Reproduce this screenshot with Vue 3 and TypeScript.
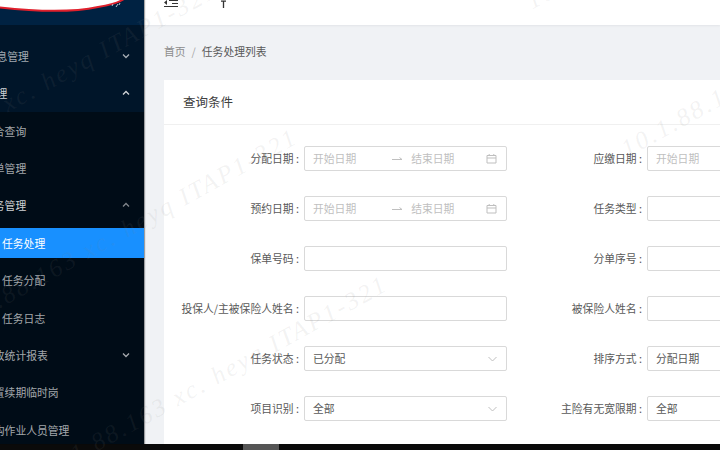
<script setup lang="ts">
type MenuItem = {
  label: string;
  level: number;
  arrow?: "up" | "down";
  light?: boolean;
  active?: boolean;
};

type Field = {
  label: string;
  kind: "date" | "text" | "select";
  value?: string;
};

const topItems: MenuItem[] = [
  { label: "保单信息管理", level: 1, arrow: "down" },
  { label: "合同管理", level: 1, arrow: "up", light: true },
];

const subItems: MenuItem[] = [
  { label: "综合查询", level: 2 },
  { label: "保单管理", level: 2 },
  { label: "任务管理", level: 2, arrow: "up", light: true },
  { label: "任务处理", level: 3, active: true },
  { label: "任务分配", level: 3 },
  { label: "任务日志", level: 3 },
  { label: "催收统计报表", level: 2, arrow: "down" },
  { label: "设置续期临时岗", level: 2 },
  { label: "机构作业人员管理", level: 2 },
];

const fields: Field[] = [
  { label: "分配日期", kind: "date" },
  { label: "应缴日期", kind: "date" },
  { label: "预约日期", kind: "date" },
  { label: "任务类型", kind: "select" },
  { label: "保单号码", kind: "text" },
  { label: "分单序号", kind: "text" },
  { label: "投保人/主被保险人姓名", kind: "text" },
  { label: "被保险人姓名", kind: "text" },
  { label: "任务状态", kind: "select", value: "已分配" },
  { label: "排序方式", kind: "select", value: "分配日期" },
  { label: "项目识别", kind: "select", value: "全部" },
  { label: "主险有无宽限期", kind: "select", value: "全部" },
];

const marks = ["mark-a", "mark-b", "mark-c", "mark-d", "mark-e"];
</script>

<template>
  <div class="screen">
    <div class="body">
      <aside class="sidebar">
        <div class="logo">
          <svg class="logo-mark" width="144" height="25" viewBox="0 0 144 25">
            <path
              d="M-4 7 C30 11 70 13 98 7 C110 5 120 3 125 -2 L-4 -2 Z"
              fill="#fff"
              stroke="#e0202c"
              stroke-width="2"
            />
            <path d="M112 6l1-2M116 7l2-3M119 5l1-2" stroke="#b8c4d2" stroke-width="1" />
          </svg>
        </div>
        <nav class="menu">
          <div
            v-for="item in topItems"
            :key="item.label"
            class="menu-item"
            :class="[`level-${item.level}`, { light: item.light }]"
          >
            <span class="menu-label">{{ item.label }}</span>
            <svg v-if="item.arrow" class="chevron" :class="item.arrow" width="8" height="6" viewBox="0 0 8 6">
              <path d="M1 1.5l3 3 3-3" fill="none" stroke="currentColor" stroke-width="1.3" />
            </svg>
          </div>
          <div class="submenu">
            <div
              v-for="item in subItems"
              :key="item.label"
              class="menu-item"
              :class="[`level-${item.level}`, { light: item.light, active: item.active }]"
            >
              <span class="menu-label">{{ item.label }}</span>
              <svg v-if="item.arrow" class="chevron" :class="item.arrow" width="8" height="6" viewBox="0 0 8 6">
                <path d="M1 1.5l3 3 3-3" fill="none" stroke="currentColor" stroke-width="1.3" />
              </svg>
            </div>
          </div>
        </nav>
      </aside>

      <main class="main">
        <header class="topbar">
          <svg width="14" height="8" viewBox="0 0 14 8">
            <path d="M5 .5h9M8 3.5h6M0 6.5h14" fill="none" stroke="#333" stroke-width="1.2" />
            <path d="M0 2.5l3-2.5v5z" fill="#333" />
          </svg>
          <svg class="top-icon" width="7" height="8" viewBox="0 0 7 8">
            <path d="M3.5 8V1M1 1.2h5" fill="none" stroke="#333" stroke-width="1.3" />
          </svg>
        </header>

        <div class="breadcrumb">
          <span class="crumb-home">首页</span>
          <span class="crumb-sep">/</span>
          <span class="crumb-current">任务处理列表</span>
        </div>

        <section class="card">
          <div class="card-title">查询条件</div>
          <div class="form">
            <div v-for="field in fields" :key="field.label" class="field">
              <label class="field-label">{{ field.label }} :</label>
              <div class="control">
                <template v-if="field.kind === 'date'">
                  <span class="date-part">开始日期</span>
                  <svg class="range-arrow" width="11" height="6" viewBox="0 0 11 6">
                    <path d="M0 3.5h10M7.5 1.5l2.5 2" fill="none" stroke="#bfbfbf" stroke-width="1" />
                  </svg>
                  <span class="date-part">结束日期</span>
                  <svg class="calendar" width="11" height="11" viewBox="0 0 11 11">
                    <path
                      d="M1 2.5h9v7.5h-9zM1 5h9M3.2 1v2M7.8 1v2"
                      fill="none"
                      stroke="#bfbfbf"
                      stroke-width="1"
                    />
                  </svg>
                </template>
                <template v-else-if="field.kind === 'select'">
                  <span class="value">{{ field.value }}</span>
                  <svg class="select-arrow" width="9" height="6" viewBox="0 0 9 6">
                    <path d="M.5 1l4 4 4-4" fill="none" stroke="#bfbfbf" stroke-width="1" />
                  </svg>
                </template>
              </div>
            </div>
          </div>
        </section>
      </main>
    </div>

    <div class="bottom-strip">
      <span class="strip-thumb"></span>
    </div>

    <div class="watermarks" aria-hidden="true">
      <span v-for="mark in marks" :key="mark" class="mark" :class="mark">10.1.88.163 xc. heyq ITAP1-321</span>
    </div>
  </div>
</template>

<style>
html,
body {
  margin: 0;
  background: #0a0a0a;
}
</style>

<style scoped>
.screen {
  position: relative;
  display: flex;
  flex-direction: column;
  width: 720px;
  height: 450px;
  overflow: hidden;
  font-family: "Noto Sans CJK SC", "Liberation Sans", sans-serif;
  font-size: 10.8px;
}

.body {
  display: flex;
  height: 444px;
}

.sidebar {
  flex: 0 0 144px;
  overflow: hidden;
  background: #000c17;
  box-shadow: 1px 0 1px rgba(0, 0, 0, 0.35);
  z-index: 1;
}

.logo {
  height: 25px;
  background: #002242;
}

.logo-mark {
  display: block;
}

.menu {
  display: flex;
  flex-direction: column;
  padding-top: 12.3px;
  background: #001529;
}

.submenu {
  display: flex;
  flex-direction: column;
  background: #000c17;
}

.menu-item {
  display: flex;
  align-items: center;
  height: 30px;
  margin: 3.7px 0;
  color: rgba(255, 255, 255, 0.65);
  white-space: nowrap;
}

.menu-item.light {
  color: rgba(255, 255, 255, 0.82);
}

.menu-item.active {
  background: #1890ff;
  color: #fff;
}

.menu-label {
  flex: 1;
}

.level-1 .menu-label {
  margin-left: -36px;
}

.level-2 .menu-label {
  margin-left: -17px;
}

.level-3 .menu-label {
  margin-left: 2px;
}

.chevron {
  flex: none;
  margin-right: 14px;
}

.chevron.up {
  transform: rotate(180deg);
}

.level-2.light .chevron {
  color: rgba(255, 255, 255, 0.5);
}

.main {
  flex: 1;
  min-width: 0;
  overflow: hidden;
  background: #f0f2f5;
}

.topbar {
  display: flex;
  align-items: flex-start;
  height: 25px;
  padding-left: 20px;
  background: #fff;
  box-shadow: 0 1px 2px rgba(0, 21, 41, 0.06);
}

.topbar svg {
  display: block;
}

.top-icon {
  margin-left: 42px;
}

.breadcrumb {
  display: flex;
  align-items: center;
  box-sizing: border-box;
  height: 55px;
  padding: 0 0 3px 20px;
}

.crumb-home {
  color: #8c8c8c;
}

.crumb-sep {
  margin: 0 6px;
  color: #a6a6a6;
}

.crumb-current {
  color: #595959;
}

.card {
  height: 364px;
  margin-left: 20px;
  overflow: hidden;
  background: #fff;
}

.card-title {
  height: 45px;
  padding-left: 19px;
  border-bottom: 1px solid #f0f0f0;
  box-sizing: border-box;
  line-height: 44px;
  font-size: 12.5px;
  color: #404040;
}

.form {
  display: grid;
  grid-template-columns: repeat(2, 343px);
  row-gap: 25px;
  padding-top: 21px;
}

.field {
  display: flex;
  align-items: center;
  height: 25px;
}

.field-label {
  flex: 0 0 140px;
  box-sizing: border-box;
  padding: 0 5px 2px 0;
  text-align: right;
  color: #595959;
  white-space: nowrap;
}

.control {
  display: flex;
  align-items: center;
  box-sizing: border-box;
  flex: 0 0 203px;
  height: 25px;
  padding: 0 9px 0 8px;
  border: 1px solid #d9d9d9;
  border-radius: 2px;
  background: #fff;
}

.date-part {
  flex: none;
  padding-bottom: 2px;
  color: #bfbfbf;
}

.range-arrow {
  flex: none;
  margin: 0 8px 0 36px;
}

.calendar {
  flex: none;
  margin-left: auto;
}

.value {
  flex: 1;
  padding-bottom: 2px;
  color: #595959;
}

.select-arrow {
  flex: none;
}

.bottom-strip {
  display: flex;
  flex: 1;
  padding-left: 243px;
  background: #0a0a0a;
}

.strip-thumb {
  width: 36px;
  background: #555;
}

.watermarks {
  position: absolute;
  inset: 0;
  z-index: 2;
  overflow: hidden;
  pointer-events: none;
}

.mark {
  position: absolute;
  transform-origin: left bottom;
  transform: rotate(-29deg);
  font-family: "Liberation Serif", serif;
  font-style: italic;
  font-size: 25px;
  letter-spacing: 2.5px;
  white-space: nowrap;
  color: rgba(130, 130, 130, 0.1);
}

.mark-a {
  left: -125px;
  top: 165px;
}

.mark-b {
  left: -45px;
  top: 312px;
}

.mark-c {
  left: 45px;
  top: 459px;
}

.mark-d {
  left: 630px;
  top: 135px;
}

.mark-e {
  left: 535px;
  top: -13px;
}
</style>
